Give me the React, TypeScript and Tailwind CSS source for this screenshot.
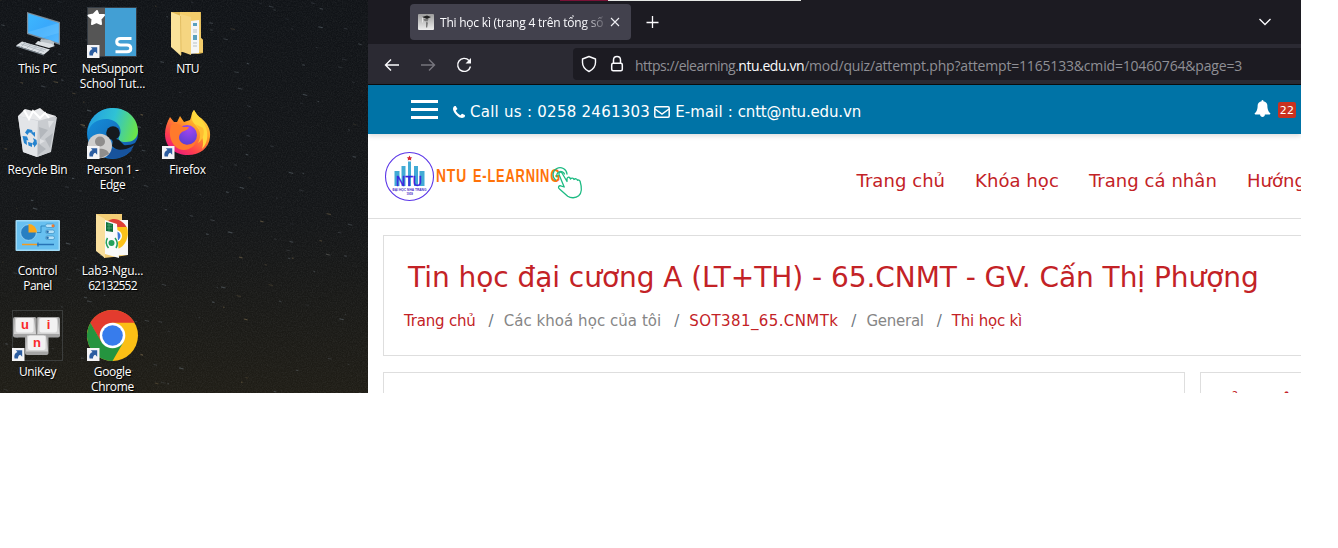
import React from 'react';

const SEGOE = "font-['Open_Sans','Noto_Sans',sans-serif]";

function Shortcut() {
  return (
    <g>
      <rect x="0" y="39" width="12.5" height="13" fill="#f4f4f6" />
      <path d="M2.5 49.5c-.6-3 .2-5.500 3-6.500L3.800 41.300h6.400v6.400L8.300 45.800C6.500 46.500 6 47.700 6 49.500Z" fill="#2c5da0" />
    </g>
  );
}

function Svg({ children }: { children: React.ReactNode }) {
  return (
    <svg width="52" height="52" viewBox="0 0 52 52" className="block shrink-0">
      {children}
    </svg>
  );
}

const ThisPc = () => (
  <Svg>
    <defs>
      <linearGradient id="scr" x1="0" y1="0" x2="1" y2="1">
        <stop offset="0" stopColor="#3db8ff" />
        <stop offset=".5" stopColor="#39a9fb" />
        <stop offset="1" stopColor="#55b9ff" />
      </linearGradient>
    </defs>
    <path d="M15 6 48 16v23L15 28Z" fill="#7d8b96" />
    <path d="M16.200 7.500 46.800 17v20L16.200 27Z" fill="url(#scr)" />
    <path d="M46.800 17v10L31 31.500 16.200 27v-1Z" fill="#6cc5ff" opacity=".45" />
    <path d="m29 33 9 1 4 2v3l-10-1-4-3Z" fill="#b9c1c6" />
    <path d="m26 35 14 3 3 2-6 2-14-4Z" fill="#dce1e4" />
    <path d="M10 35.500 38 43.500l-6 5L4 39.500Z" fill="#dbe0e4" />
    <path d="m4 39.500 28 9v1l-28-9Z" fill="#8a959d" />
    <path d="m11 37 23 7M9 38l23 7.500M14 36l-5 5M19 38l-5 5M25 39.500l-5 5M31 41.500l-5 5" stroke="#a9b3ba" strokeWidth=".8" />
  </Svg>
);

const NetSupport = () => (
  <Svg>
    <rect x=".500" y="1.500" width="49" height="49" fill="#555" stroke="#343b43" />
    <rect x="18" y="2" width="31" height="48" fill="#429fd4" />
    <path d="m10 5 1.500 4 5.500 0-3.500 4 .5 5-4.500-2-4.500 2 .5-5-4-3.500 5-1Z" fill="#fff" stroke="#fff" strokeWidth="2" strokeLinejoin="round" />
    <path d="M44.500 32.500H33.500q-3.800 0-3.800 3.300t3.800 3.300h6.500q3.800 0 3.800 3.300t-3.800 3.300H28.500" fill="none" stroke="#fff" strokeWidth="3" />
    <Shortcut />
  </Svg>
);

const NtuFolder = () => (
  <Svg>
    <path d="M9 6h30v26l2 2v13l-5 1-19-3Z" fill="#dfb855" />
    <path d="M18 6h20l1 26 2 2v12H18Z" fill="#f3cd6b" />
    <path d="m29 15 8-1v33l-9 1Z" fill="#f5f6f6" />
    <path d="M31 17h4v3h-4ZM31 29h4v5h-4Z" fill="#5aa0bd" />
    <path d="M31 24h4M31 26h4M31 37h4M31 40h4" stroke="#b7c1c5" />
    <path d="m18 8 11 3v38l-11-4Z" fill="#f5d581" />
    <path d="m9 6 10 4v40L9 41Z" fill="#fbe39a" />
    <path d="m18.500 10 .5 39" stroke="#d7ae4a" strokeWidth=".700" />
  </Svg>
);

const RecycleBin = () => (
  <Svg>
    <path d="m6 9 7-7 8 2 7-3 6 5 10 3-5 8H10Z" fill="#e8e9eb" />
    <path d="m6 9 5 36 14 5 14-5 6-35-16 4Z" fill="#cfd2d6" />
    <path d="m6 9 20 5-1 36-14-5Z" fill="#e3e5e8" />
    <path d="m26 14 18-5-6 36-13 5Z" fill="#c9ccd0" />
    <path d="m12 3 5 9 4-8 7 7 5-5 4 5" fill="none" stroke="#fff" strokeWidth="2" />
    <path d="m27 20 9 3-8 9ZM41 26l-8 6 5 9ZM26 36l8 6-8 6Z" fill="#b3b7bc" />
    <path d="m36 14 6 0-5 7ZM28 32l5 2-5 3Z" fill="#dfe1e4" />
    <path d="m13 25.500 2.500-3.500 4.500 1 1 3-4-.5-1.500 2.500ZM19 26l4-1 0 5Z" fill="#2684cf" />
    <path d="m10.500 29 4.500.5 1.500 4-2-.5.5 5-3-2ZM16 35l4 1 0 4-3.500-1.500Z" fill="#2684cf" />
    <path d="m21 31 3.500 2 .5 4-3 3.500 0-2-2-1.500 2-3Z" fill="#2684cf" />
  </Svg>
);

const Edge = () => (
  <Svg>
    <defs>
      <linearGradient id="edgeTop" x1="0" y1=".3" x2="1" y2=".5">
        <stop offset="0" stopColor="#249fe0" />
        <stop offset=".5" stopColor="#2fc2d5" />
        <stop offset="1" stopColor="#6ae449" />
      </linearGradient>
      <linearGradient id="edgeLeft" x1="0" y1="0" x2="1" y2="1">
        <stop offset="0" stopColor="#1596df" />
        <stop offset="1" stopColor="#1355a8" />
      </linearGradient>
    </defs>
    <circle cx="25.500" cy="26.500" r="25.500" fill="url(#edgeLeft)" />
    <path d="M26 33c6 7 16 6 22 3l5-8v14h-6c-9 3-18 2-22-3Z" fill="#151a1e" />
    <path d="M1 25C2 9 14 1 26 1c15 0 25 11 25 23 0 8-6 11-12 11-6 0-8-2-7-5 5-8-2-18-13-18C10 12 3 17 1 25Z" fill="url(#edgeTop)" />
    <circle cx="26" cy="26" r="6.800" fill="#151a1e" />
    <path d="M24 30c1 7 8 9 14 9l-6-6Z" fill="#151a1e" />
    <path d="M19 27c-2 12 8 18 20 15 4-1 6-3 8-4-3 9-15 15-25 13-8-3-9-18-3-24Z" fill="#17539d" />
    <circle cx="12.800" cy="39" r="12.200" fill="#cfcecd" />
    <circle cx="13" cy="34.500" r="5" fill="#8f8d8c" />
    <path d="M4 47c1-7 17-7 18 0l-8 4Z" fill="#8f8d8c" />
    <Shortcut />
  </Svg>
);

const Firefox = () => (
  <Svg>
    <defs>
      <linearGradient id="ff" x1=".9" y1="0" x2=".2" y2="1">
        <stop offset="0" stopColor="#fff44f" />
        <stop offset=".4" stopColor="#ff9b26" />
        <stop offset=".75" stopColor="#ff3d4f" />
        <stop offset="1" stopColor="#e51587" />
      </linearGradient>
      <radialGradient id="ffp" cx=".6" cy=".2" r=".8">
        <stop offset="0" stopColor="#a345f0" />
        <stop offset="1" stopColor="#5b3fd3" />
      </radialGradient>
    </defs>
    <path d="m8 10 4 5 3 0 3-6 4 6 6-2c2-4 1-7 4-10 3 5 5 7 7 8 6 5 10 11 9 19-1 11-10 18-22 18C13 48 3 40 3 27c0-6 2-12 5-17Z" fill="url(#ff)" />
    <path d="M32 3c3 6 7 8 9 12 6 8 6 20-1 27 2-6 1-11-1-14-1-7-7-10-9-15 0-4 0-7 2-10Z" fill="#ffd93d" />
    <circle cx="25" cy="28" r="10" fill="url(#ffp)" />
    <path d="M9 18c5-2 9-1 12 2h6c-1 3-5 4-7 5-4 3-4 8 0 11 4 3 10 2 14-2-1 6-9 11-17 8-8-4-11-14-8-24Z" fill="#ff7a2c" />
    <path d="M33 17c5 4 7 12 3 19 5-3 7-10 5-15" fill="#ffbd32" />
    <Shortcut />
  </Svg>
);

const ControlPanel = () => (
  <Svg>
    <rect x="3.500" y="12" width="44.500" height="31" rx="1" fill="#a0daf6" />
    <rect x="5" y="13.500" width="41.500" height="28" fill="#68c0f0" />
    <circle cx="16.500" cy="24.500" r="7.800" fill="#277fc2" stroke="#c2e9fc" strokeWidth=".500" />
    <path d="M16.500 24.500v-8.500A8.500 8.500 0 0 1 25 24.500Z" fill="#fba81b" />
    <path d="M25 24.500h4v-6.500h4" fill="none" stroke="#267cb5" strokeWidth=".800" />
    <g fill="#b4e0f7" stroke="#3a8ec2" strokeWidth=".700">
      <rect x="33.500" y="16" width="9" height="3.500" rx="1.700" />
      <rect x="33.500" y="22" width="9" height="3.500" rx="1.700" />
      <rect x="33.500" y="28" width="9" height="3.500" rx="1.700" />
    </g>
    <circle cx="41" cy="17.700" r="1.500" fill="#f37a2c" />
    <circle cx="35.500" cy="23.700" r="1.300" fill="#246fae" />
    <circle cx="35.500" cy="29.700" r="1.300" fill="#246fae" />
    <path d="M10 36.500h15" stroke="#f59b1c" strokeWidth="1.500" />
    <path d="M25 36.500h17M26 34.500v4" stroke="#2773b6" strokeWidth="1.300" />
  </Svg>
);

const LabFolder = () => (
  <Svg>
    <path d="M9 6h26v6l6 1v34l-6 1-18 2Z" fill="#f3cd75" />
    <path d="M22 12h19v35H23Z" fill="#f7f7f7" />
    <path d="M21 13c7-5 16 0 19 7H26Z" fill="#df4037" />
    <path d="M29 19h11c3 10-2 20-10 22Z" fill="#fcc21a" />
    <circle cx="29" cy="28" r="6" fill="#fff" />
    <circle cx="29" cy="28" r="4.500" fill="#3b78d8" />
    <path d="m18 12 12 4 2 34-14-4Z" fill="#fafafa" />
    <path d="m19 14 7 2v8l-7-1Z" fill="#10703c" />
    <path d="M20 17h5M20 20h5M22 15v8" stroke="#53ac78" strokeWidth=".700" />
    <circle cx="24.500" cy="35" r="3" fill="#24a15b" />
    <path d="M20.500 30q-3 5 1 10M28 30q4 5 1 10" fill="none" stroke="#24a15b" strokeWidth="1.500" />
    <path d="m9 6 9 5v39L9 43Z" fill="#f9df9d" />
  </Svg>
);

function Key({ x, y, c }: { x: number; y: number; c: string }) {
  return (
    <g transform={`translate(${x} ${y})`}>
      <rect width="23.500" height="20.500" rx="2" fill="#a4a4a4" />
      <path d="M2 1h19l2 16H1Z" fill="#d4d4d4" />
      <rect x="3" y="1" width="17.500" height="14.500" rx="2" fill="#f2f2f2" />
      <text x="12" y="12" textAnchor="middle" fontSize="13" fontWeight="700" fill="#fa2a2a" fontFamily="Liberation Sans">{c}</text>
    </g>
  );
}

const UniKey = () => (
  <Svg>
    <rect x=".500" y="1.500" width="50" height="50" fill="none" stroke="#3b3d3c" />
    <Key x={1} y={8} c="u" />
    <Key x={24.500} y={8} c="i" />
    <Key x={13} y={25.500} c="n" />
    <Shortcut />
  </Svg>
);

const Chrome = () => (
  <Svg>
    <circle cx="25.500" cy="26.500" r="25.500" fill="#fbbf15" />
    <path d="M25.500 26.500 3.400 13.700A25.500 25.500 0 0 1 47.600 13.700H25.500Z" fill="#e33b2e" />
    <path d="M3.400 13.700A25.500 25.500 0 0 0 25.500 52l11-19-11-6.500-11 6.500Z" fill="#25943f" />
    <path d="m3.400 13.700 11 19.300 11-6.500Z" fill="#25943f" />
    <path d="M3.400 13.700 14.500 33l11-19.300Z" fill="#e33b2e" />
    <circle cx="25.500" cy="26.500" r="12.800" fill="#fff" />
    <circle cx="25.500" cy="26.500" r="10.300" fill="#377cec" />
    <Shortcut />
  </Svg>
);

const icons: { art: React.ReactNode; lines: [string, string][] }[] = [
  { art: <ThisPc />, lines: [['This PC', 'tracking-[-0.3px]']] },
  { art: <NetSupport />, lines: [['NetSupport', 'tracking-[-0.35px]'], ['School Tut...', 'tracking-[-0.2px]']] },
  { art: <NtuFolder />, lines: [['NTU', 'tracking-[-0.6px]']] },
  { art: <RecycleBin />, lines: [['Recycle Bin', 'tracking-[-0.25px]']] },
  { art: <Edge />, lines: [['Person 1 -', 'tracking-[-0.45px]'], ['Edge', 'tracking-[-0.5px]']] },
  { art: <Firefox />, lines: [['Firefox', 'tracking-[-0.3px]']] },
  { art: <ControlPanel />, lines: [['Control', 'tracking-[-0.3px]'], ['Panel', 'tracking-[-0.5px]']] },
  { art: <LabFolder />, lines: [['Lab3-Ngu...', 'tracking-[-0.15px]'], ['62132552', 'tracking-[-0.8px]']] },
  { art: null, lines: [] },
  { art: <UniKey />, lines: [['UniKey', 'tracking-[-0.35px]']] },
  { art: <Chrome />, lines: [['Google', 'tracking-[-0.35px]'], ['Chrome', 'tracking-[-0.35px]']] },
];

const streaks = Array.from({ length: 190 }, (_, i) => ({
  x: (i * 97.3 + (i * i * 13) % 61) % 366,
  y: (i * 53.7 + (i * i * 7) % 89) % 393,
  l: 1.5 + (i % 4),
  o: 0.12 + (i % 6) * 0.06,
  c: i % 5 === 0 ? '#b79a6c' : '#7d8791',
}));

function Wallpaper() {
  return (
    <svg className="absolute inset-0" width="368" height="393">
      <defs>
        <linearGradient id="sky" x1="0" y1="0" x2="0" y2="1">
          <stop offset="0" stopColor="#101317" />
          <stop offset=".55" stopColor="#141618" />
          <stop offset="1" stopColor="#1f1d16" />
        </linearGradient>
        <filter id="grain" x="0" y="0" width="100%" height="100%">
          <feTurbulence type="fractalNoise" baseFrequency=".8" numOctaves="2" seed="4" />
          <feColorMatrix values="0 0 0 0 .6  0 0 0 0 .62  0 0 0 0 .62  .5 .5 0 0 -.38" />
        </filter>
      </defs>
      <rect width="368" height="393" fill="url(#sky)" />
      <rect width="368" height="393" filter="url(#grain)" opacity=".2" />
      {streaks.map((s, i) => (
        <path key={i} d={`M${s.x} ${s.y}l${s.l} ${s.l * 0.25}`} stroke={s.c} strokeOpacity={s.o} strokeWidth="1.100" />
      ))}
    </svg>
  );
}

function Desktop() {
  return (
    <div className="relative h-full w-[368px] shrink-0 overflow-hidden">
      <Wallpaper />
      <div className="relative grid auto-rows-[101px] grid-cols-[75px_75px_75px] pt-[6px]">
        {icons.map((it, i) => (
          <div key={i} className="flex flex-col items-center">
            {it.art}
            <div className={`mt-[3px] text-center text-[12px] leading-[15px] whitespace-nowrap text-white [text-shadow:1px_1px_1px_#000] ${SEGOE}`}>
              {it.lines.map(([t, k]) => (
                <div key={t} className={k}>{t}</div>
              ))}
            </div>
          </div>
        ))}
      </div>
    </div>
  );
}

function TabBar() {
  return (
    <div className="relative flex h-[44px] shrink-0 items-start bg-[#1c1b22] pt-[4px] pl-[42px]">
      <div className="absolute top-0 left-[192px] flex h-px w-[241px]">
        <div className="w-[48px] bg-[#7a1236]" />
        <div className="flex-1 bg-[#e6e9e6]" />
      </div>
      <div className="flex h-[36px] w-[221px] items-center rounded-[4px] bg-[#42414d] pl-[8px]">
        <svg width="16" height="16" viewBox="0 0 16 16" className="shrink-0">
          <defs>
            <linearGradient id="fav" x1="0" y1="0" x2="0" y2="1">
              <stop offset="0" stopColor="#9d9d9d" />
              <stop offset="1" stopColor="#eee" />
            </linearGradient>
          </defs>
          <rect width="16" height="16" rx="1" fill="url(#fav)" />
          <path d="m4 3 5-1.500L13 3 9 5Z" fill="#222" />
          <path d="M5.500 5h5l-1 2.500-3-.5Z" fill="#777" />
          <path d="M8 8l2 .5-.8 5H8Z" fill="#777" />
          <path d="M4.500 3.500v5" stroke="#eee" strokeWidth=".800" />
        </svg>
        <div className={`mt-[2px] ml-[6px] w-[167px] overflow-hidden text-[12px] tracking-[-0.22px] whitespace-nowrap text-[#fbfbfe] [mask-image:linear-gradient(to_right,#000_143px,transparent_169px)] ${SEGOE}`}>
          Thi học kì (trang 4 trên tổng số 5)
        </div>
        <svg width="10" height="10" viewBox="0 0 10 10" className="ml-[3px]">
          <path d="m1 1 8 8M9 1 1 9" stroke="#f0f0f4" strokeWidth="1.100" />
        </svg>
      </div>
      <svg width="14" height="14" viewBox="0 0 14 14" className="mt-[11px] ml-[14px]">
        <path d="M7.500 1v12M1.500 7.500h12" stroke="#fbfbfe" strokeWidth="1.300" />
      </svg>
      <svg width="14" height="8" viewBox="0 0 14 8" className="mt-[14px] mr-[29px] ml-auto">
        <path d="m1.500 1 5.500 5.500L12.500 1" fill="none" stroke="#fbfbfe" strokeWidth="1.300" />
      </svg>
    </div>
  );
}

function Toolbar() {
  return (
    <div className="flex h-[41px] shrink-0 items-center border-b border-[#0c0c0d] bg-[#2b2a33] pl-[16px]">
      <svg width="90" height="18" viewBox="0 0 90 18" fill="none" strokeWidth="1.400" className="mt-[2px]">
        <path d="M15 9H1.500M7 3.500 1.500 9 7 14.500" stroke="#fbfbfe" />
        <path d="M37 9h13.500M45 3.500 50.500 9 45 14.500" stroke="#77767e" />
        <path d="M86.500 10.500a6.500 6.500 0 1 1-1.500-6" stroke="#fbfbfe" />
        <path d="M87 2v5.500h-5.500Z" fill="#fbfbfe" />
      </svg>
      <div className="ml-[99px] flex h-[32px] flex-1 items-center rounded-l-[4px] bg-[#1c1b22] pl-[8px]">
        <svg width="16" height="18" viewBox="0 0 16 18" fill="none" stroke="#fbfbfe" strokeWidth="1.400">
          <path d="M8 1.500 14.500 4v3.500c0 4-2.500 7-6.500 9-4-2-6.500-5-6.500-9V4Z" strokeLinejoin="round" />
        </svg>
        <svg width="14" height="18" viewBox="0 0 14 18" fill="none" stroke="#fbfbfe" strokeWidth="1.500" className="ml-[13px]">
          <rect x="1.700" y="8.200" width="10.600" height="7.600" rx="1.500" />
          <path d="M3.500 8V5q0-3.500 3.500-3.500T10.500 5v3" />
        </svg>
        <div className={`mt-[2px] ml-[11px] text-[14px] whitespace-nowrap text-[#8f8f95] ${SEGOE}`}>
          <span className="tracking-[-0.51px]">https://elearning.</span>
          <span className="tracking-[-0.43px] text-[#fbfbfe]">ntu.edu.vn</span>
          <span className="tracking-[-0.18px]">/mod/quiz/attempt.php?attempt=1165133&amp;cmid=10460764&amp;page=3</span>
        </div>
      </div>
    </div>
  );
}

function ContactBar() {
  return (
    <div className="relative z-10 flex h-[49px] shrink-0 items-center bg-[#0073a6] pl-[43px] text-[15px] text-white shadow-[0_2px_5px_rgba(0,0,0,0.14)]">
      <div className="flex w-[27px] flex-col gap-[5px]">
        <div className="h-[3px] bg-white" />
        <div className="h-[3px] bg-white" />
        <div className="h-[3px] bg-white" />
      </div>
      <svg width="12" height="12" viewBox="0 0 1408 1408" className="mt-[4px] ml-[15px]" fill="#fff">
        <path d="M1408 1112q0 27-10 70.500t-21 68.500q-21 50-122 106-94 51-186 51-27 0-53-3.500t-57.500-12.500-47-14.500-55.500-20.500-49-18q-98-35-175-83-127-79-264-216t-216-264q-48-77-83-175-3-9-18-49t-20.500-55.500-14.500-47-12.500-57.500-3.500-53q0-92 51-186 56-101 106-122 25-11 68.500-21t70.500-10q14 0 21 3 18 6 53 76 11 19 30 54t35 63.500 31 53.500q3 4 17.500 25t21.500 35.500 7 28.500q0 20-28.500 50t-62 55-62 53-28.500 46q0 9 5 22.500t8.500 20.500 14 24 11.500 19q76 137 174 235t235 174q2 1 19 11.500t24 14 20.500 8.500 22.500 5q18 0 46-28.500t53-62 55-62 50-28.500q14 0 28.500 7t35.500 21.500 25 17.500q25 15 53.500 31t63.500 35 54 30q70 35 76 53 3 7 3 21z" />
      </svg>
      <span className="mt-[5px] ml-[5px] tracking-[0.26px] whitespace-nowrap">Call us : 0258 2461303</span>
      <svg width="16" height="12" viewBox="0 0 16 12" className="mt-[5px] ml-[4px]" fill="none" stroke="#fff" strokeWidth="1.500">
        <rect x=".800" y=".800" width="14.400" height="10.400" rx="1.200" />
        <path d="M1 3 8 8l7-5" />
      </svg>
      <span className="mt-[5px] ml-[5px] whitespace-nowrap">
        <span className="tracking-[0.1px]">E-mail : </span>
        <span className="tracking-[-0.15px]">cntt@ntu.edu.vn</span>
      </span>
      <svg width="17" height="17" viewBox="0 0 1792 1792" className="mr-[7px] mb-[2px] ml-auto" fill="#fff">
        <path d="M1728 1408q0 52-38 90t-90 38h-448q0 106-75 181t-181 75-181-75-75-181h-448q-52 0-90-38t-38-90q50-42 91-88t85-119.500 74.500-158.500 50-206 19.500-260q0-152 117-282.500t307-158.500q-8-19-8-39 0-40 28-68t68-28 68 28 28 68q0 20-8 39 190 28 307 158.500t117 282.500q0 139 19.500 260t50 206 74.500 158.500 85 119.500 91 88z" />
      </svg>
      <div className="mt-px mr-[5px] flex h-[16px] w-[18px] items-center justify-center rounded-[2px] bg-[#ca3120] pt-[2px] text-[11px] tracking-[0.3px]">22</div>
    </div>
  );
}

function Logo() {
  return (
    <svg width="200" height="54" viewBox="0 0 200 54" className="mt-[2px] shrink-0">
      <circle cx="25.500" cy="26.500" r="24" fill="#fff" stroke="#5a35e8" strokeWidth="1.100" />
      <path d="m25.500 5.500.9 1.700 1.900.2-1.400 1.300.4 1.900-1.800-.9-1.800.9.400-1.900-1.400-1.300 1.900-.2Z" fill="#d72630" />
      <path d="M10.500 21h5v15h-5ZM17.500 16h4v20h-4ZM24 11.500h3v24.500h-3ZM30 16h4v20H30ZM35.500 21h5v15h-5Z" fill="#42abd5" />
      <text x="12" y="36" fontSize="14" fontWeight="400" textLength="26" lengthAdjust="spacingAndGlyphs" fill="#3a20e0" stroke="#3a20e0" strokeWidth=".4" fontFamily="Liberation Sans">NTU</text>
      <text x="8.500" y="41" fontSize="4" fontWeight="700" textLength="34" lengthAdjust="spacingAndGlyphs" fill="#4a30c8" fontFamily="Liberation Sans">ĐẠI HỌC NHA TRANG</text>
      <text x="22.500" y="45" fontSize="3" fontWeight="700" textLength="6.500" fill="#4a30c8" fontFamily="Liberation Sans">1959</text>
      <g fill="#ff7209" fontFamily="Liberation Sans" fontWeight="700" fontSize="19" letterSpacing="1.200">
        <text x="52" y="31.500" textLength="31" lengthAdjust="spacingAndGlyphs">NTU</text>
        <text x="89" y="31.500" textLength="88" lengthAdjust="spacingAndGlyphs">E-LEARNING</text>
      </g>
      <g fill="none" stroke="#1dbb83" strokeWidth="1.300" strokeLinejoin="round" strokeLinecap="round">
        <path d="M175 24.500c-.8-2 2-3.300 3-1.500l5 8.500v-3c1-2 3-1.500 3.500.5 1-1.500 3-1.200 3.500.500 1.200-1.300 3-.7 3.500.800 1.300-.800 2.500.200 2.700 1.500 1.500 5 2 11-1.500 14-3 2.500-8 2.500-11 .500L175.500 39c-2-1.500-.800-3.500 1.200-3.200l3.500 1.200Z" />
        <path d="M173 27a4 4 0 1 1 7.500-3M171.500 30a7 7 0 1 1 11.500-6" />
      </g>
    </svg>
  );
}

function Header() {
  return (
    <div className="flex h-[85px] shrink-0 items-center border-b border-[#dedede] bg-white pl-[16px] text-[18px] text-[#c32226]">
      <Logo />
      <nav className="mt-[9px] ml-[272.5px] flex gap-[30px] tracking-[0.06px] whitespace-nowrap">
        <span>Trang chủ</span>
        <span>Khóa học</span>
        <span>Trang cá nhân</span>
        <span>Hướng dẫn</span>
      </nav>
    </div>
  );
}

const crumbs: [string, string][] = [
  ['Trang chủ', 'text-[#c32226] tracking-[-0.2px]'],
  ['Các khoá học của tôi', 'text-[#868686] tracking-[0.05px]'],
  ['SOT381_65.CNMTk', 'text-[#c32226] tracking-[0.4px]'],
  ['General', 'text-[#868686] tracking-[-0.25px]'],
  ['Thi học kì', 'text-[#c32226] tracking-[-0.2px]'],
];

function Crumbs() {
  return (
    <div className="mt-[11px] ml-[-4px] flex text-[15px] leading-[22px] whitespace-nowrap">
      {crumbs.map(([t, style], i) => (
        <React.Fragment key={t}>
          {i > 0 && <span className="mr-[10px] ml-[13px] text-[#6c757d]">/</span>}
          <span className={style}>{t}</span>
        </React.Fragment>
      ))}
    </div>
  );
}

export default function App() {
  return (
    <div className="h-[548px] w-[1338px] overflow-hidden bg-white">
      <div className="flex h-[393px] w-[1301px] overflow-hidden">
        <Desktop />
        <div className="flex h-full min-w-0 flex-1 flex-col overflow-hidden bg-white font-['DejaVu_Sans',Verdana,sans-serif]">
          <TabBar />
          <Toolbar />
          <ContactBar />
          <Header />
          <div className="mt-[16px] ml-[15px] h-[121px] shrink-0 border border-r-0 border-[#dedede] pt-[21px] pl-[24px]">
            <h1 className="text-[28px] leading-[42px] tracking-[-0.05px] whitespace-nowrap text-[#c32226]">
              Tin học đại cương A (LT+TH) - 65.CNMT - GV. Cấn Thị Phượng
            </h1>
            <Crumbs />
          </div>
          <div className="mt-[16px] ml-[15px] flex h-[120px] shrink-0 gap-[15px]">
            <div className="w-[802px] shrink-0 border border-[#dedede]" />
            <div className="flex-1 overflow-hidden border border-r-0 border-[#dedede] pt-[14px] pl-[15px] text-[17px] leading-[26px] font-bold whitespace-nowrap text-[#c32226]">
              Bảng câu hỏi
            </div>
          </div>
        </div>
      </div>
    </div>
  );
}
